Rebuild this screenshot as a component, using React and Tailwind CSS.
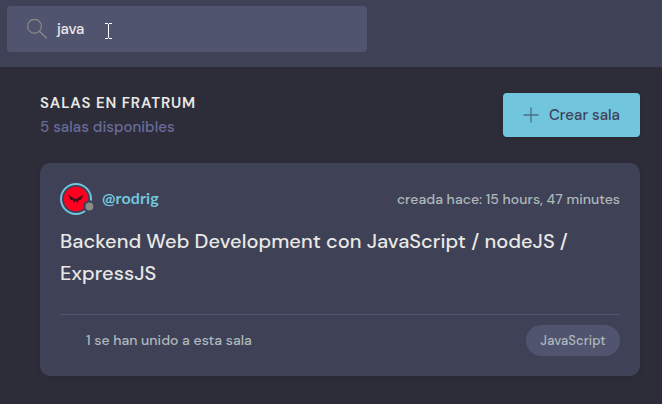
function SearchBar() {
  return (
    <header className="h-[67px] bg-[#3f4156] pt-1.5 pl-[7px]">
      <div className="relative flex h-[46px] w-[360px] items-center rounded bg-[#51546e] pl-5">
        <svg className="size-5 shrink-0" viewBox="0 0 20 20" fill="none" stroke="#8b8c88" strokeWidth="1.2">
          <circle cx="7.5" cy="7.2" r="6.9" />
          <path d="M12.4 12.2 19.7 19.4" />
        </svg>
        <span className="ml-[10px] text-[15px] tracking-[-0.2px] text-[#e8e8e8]">java</span>
        <svg className="absolute top-[17px] left-[98px] h-4 w-[7px]" viewBox="0 0 7 16" fill="none" stroke="#ffffff" shapeRendering="crispEdges">
          <path d="M0 .5h3M4 .5h3M3.5 1v14M0 15.5h3M4 15.5h3" />
        </svg>
      </div>
    </header>
  );
}

function Avatar() {
  return (
    <svg className="h-8 w-[34px] shrink-0 overflow-visible" viewBox="0 0 34 32">
      <circle cx="16" cy="16" r="15" fill="none" stroke="#71c6dd" strokeWidth="2" />
      <circle cx="16" cy="16" r="12.2" fill="#ff0020" />
      <path d="M8 11.8 13.6 15 15.7 16.2 17.8 15 23.4 11.8 21.2 16.4 18.3 17.6 17.4 20.3 15.9 17.8 15.5 17.8 14 20.3 13.1 17.6 10.2 16.4Z" fill="#42101e" />
      <circle cx="29.4" cy="23.5" r="6.3" fill="#3f4156" />
      <circle cx="29.4" cy="23.5" r="3.9" fill="#8b8b8b" />
    </svg>
  );
}

function RoomCard() {
  return (
    <article className="mt-[26px] h-[213px] rounded-[10px] bg-[#3f4156] px-5 pt-5 shadow-[0_2px_8px_rgba(0,0,0,0.08)]">
      <div className="flex h-8 items-center justify-between">
        <div className="flex items-center">
          <Avatar />
          <span className="mb-0.5 ml-2 font-['Lato',sans-serif] text-base font-bold tracking-[0.1px] text-[#71c6dd]">@rodrig</span>
        </div>
        <span className="text-sm tracking-[0.03px] text-[#adb9bb]">creada hace: 15 hours, 47 minutes</span>
      </div>
      <h2 className="mt-[10px] text-xl leading-8 tracking-[0.04px] text-[#e8e8e5]">
        Backend Web Development con JavaScript / nodeJS /<br />ExpressJS
      </h2>
      <div className="mt-[25px] flex items-center justify-between border-t border-[#51546e] pt-[10px]">
        <span className="mb-0.5 ml-[26px] text-sm tracking-[0.03px] text-[#adb9bb]">1 se han unido a esta sala</span>
        <span className="flex h-[31px] w-[94px] items-center justify-center rounded-full bg-[#51546e] text-[13px] tracking-[0.1px] text-[#adb9bb]">JavaScript</span>
      </div>
    </article>
  );
}

export default function App() {
  return (
    <div className="h-[404px] w-[662px] overflow-hidden bg-[#2d2d39] font-['DM_Sans','Inter',sans-serif] font-medium whitespace-nowrap">
      <SearchBar />
      <main className="pt-[26px] pr-[22px] pl-10">
        <div className="flex h-11 justify-between">
          <div>
            <h1 className="-mt-0.5 text-[15px] leading-6 font-[560] tracking-[0.88px] text-[#e8e8e5]">SALAS EN FRATRUM</h1>
            <p className="text-[15px] leading-6 tracking-[0.04px] text-[#696b99]">5 salas disponibles</p>
          </div>
          <button className="flex w-[137px] items-center rounded bg-[#71c6dd] pl-5 text-[#3f4156] shadow-[0_1px_5px_rgba(0,0,0,0.15)]">
            <svg className="size-4" viewBox="0 0 16 16" stroke="#4b6f86" strokeWidth="1.3">
              <path d="M8 .5v15M.5 8h15" />
            </svg>
            <span className="ml-[10px] text-[15px]">Crear sala</span>
          </button>
        </div>
        <RoomCard />
      </main>
    </div>
  );
}
